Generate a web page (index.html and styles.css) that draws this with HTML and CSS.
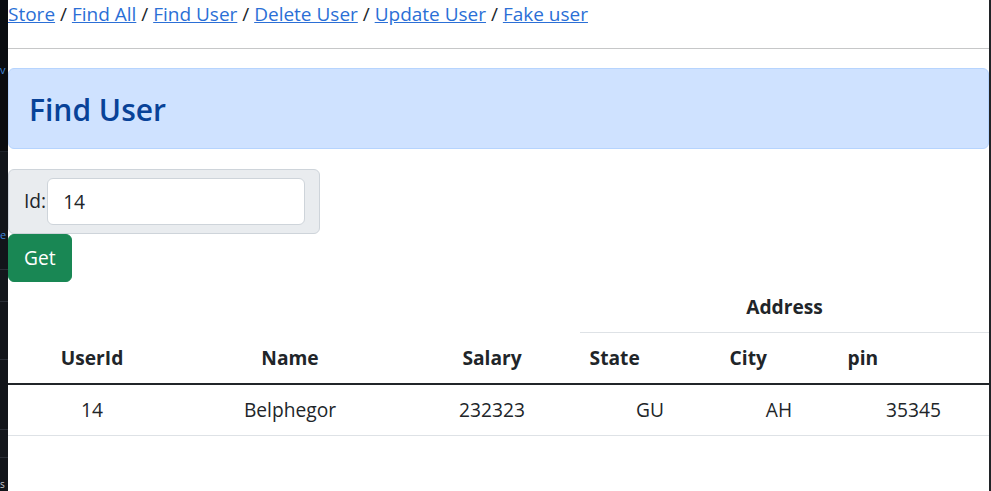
FILE: index.html
```html
<!DOCTYPE html>
<html lang="en">
<head>
<meta charset="utf-8">
<title>Find User</title>
<link rel="stylesheet" href="styles.css">
</head>
<body>
<div class="screen">
  <div class="backdrop">
    <div class="bd-seg bd-top"><span class="bd-glyph bd-v">v</span></div>
    <div class="bd-seg bd-a"></div>
    <div class="bd-seg bd-b"><span class="bd-glyph bd-e">e</span></div>
    <div class="bd-seg bd-c"></div>
    <div class="bd-seg bd-d"></div>
    <div class="bd-seg bd-e2"></div>
    <div class="bd-seg bd-f"></div>
    <div class="bd-seg bd-g"><span class="bd-glyph bd-s">s</span></div>
  </div>
  <div class="viewport">
    <nav class="crumbs">
      <a href="#">Store</a> / <a href="#">Find All</a> / <a href="#">Find User</a> / <a href="#">Delete User</a> / <a href="#">Update User</a> / <a href="#">Fake user</a>
    </nav>
    <hr class="rule">
    <div class="alert">
      <h2 class="alert-title">Find User</h2>
    </div>
    <form class="finder">
      <div class="field">
        <label class="field-label" for="uid">Id:</label>
        <input class="field-input" id="uid" type="text" value="14">
      </div>
      <button class="btn-get" type="button">Get</button>
    </form>
    <table class="users">
      <colgroup>
        <col class="c-id"><col class="c-name"><col class="c-salary"><col class="c-state"><col class="c-city"><col class="c-pin">
      </colgroup>
      <thead>
        <tr>
          <th rowspan="2" class="th-center">UserId</th>
          <th rowspan="2" class="th-center">Name</th>
          <th rowspan="2" class="th-center">Salary</th>
          <th colspan="3" class="th-center">Address</th>
        </tr>
        <tr>
          <th>State</th>
          <th>City</th>
          <th>pin</th>
        </tr>
      </thead>
      <tbody>
        <tr>
          <td>14</td>
          <td>Belphegor</td>
          <td>232323</td>
          <td>GU</td>
          <td>AH</td>
          <td>35345</td>
        </tr>
      </tbody>
    </table>
  </div>
  <div class="edge"></div>
</div>
</body>
</html>
```

FILE: styles.css
```css
* { box-sizing: border-box; }
html, body { margin: 0; padding: 0; }
body {
  font-family: "Open Sans", "Noto Sans", sans-serif;
  font-size: 19.2px;
  line-height: 28.8px;
  color: #212529;
  background: #fff;
}
.screen {
  display: flex;
  width: 991px;
  height: 491px;
  overflow: hidden;
}
.backdrop {
  width: 8px;
  flex: none;
  display: flex;
  flex-direction: column;
  background: #0c0e12;
  overflow: hidden;
}
.bd-seg { position: relative; border-bottom: 1px solid #2a2e36; overflow: hidden; }
.bd-top { height: 152px; background: #0a0c10; border-bottom-color: #1e2229; }
.bd-a { height: 76px; background: #12151a; border-bottom: none; }
.bd-b { height: 42px; background: #12151a; }
.bd-c { height: 32px; background: #14171c; }
.bd-d { height: 58px; background: #12151a; }
.bd-e2 { height: 70px; background: #12151a; }
.bd-f { height: 28px; background: #14171c; }
.bd-g { flex: 1; background: #12151a; border-bottom: none; }
.bd-glyph {
  position: absolute;
  left: 0;
  font-size: 11px;
  line-height: 12px;
  color: #3f86d8;
}
.bd-v { top: 64px; }
.bd-e { top: 1px; }
.bd-s { bottom: 1px; font-size: 10px; color: #c8ccd2; }
.viewport {
  width: 981px;
  flex: none;
  background: #fff;
}
.edge {
  width: 2px;
  flex: none;
  background: #202327;
}
.crumbs { height: 28.8px; white-space: nowrap; font-size: 19px; }
.crumbs a { color: #2b6fd6; text-decoration: underline; }
.rule {
  margin: 19.2px 0;
  border: 0;
  border-top: 1px solid #c6c7c8;
  height: 0;
}
.alert {
  background: #cfe2ff;
  border: 1px solid #b6d4fe;
  border-radius: 6px;
  padding: 20px 20px 18px;
  margin-bottom: 20px;
}
.alert-title {
  margin: 0;
  font-size: 30px;
  line-height: 41px;
  font-weight: 600;
  color: #084298;
}
.finder { display: flex; flex-direction: column; align-items: flex-start; }
.field {
  display: flex;
  align-items: center;
  width: 312px;
  padding: 8px 15px;
  background: #e9ecef;
  border: 1px solid #ced4da;
  border-radius: 6px;
}
.field-label { margin-right: 1px; }
.field-input {
  width: 258px;
  height: 47px;
  padding: 0 15px;
  border: 1px solid #ced4da;
  border-radius: 6px;
  font: inherit;
  color: #212529;
  background: #fff;
}
.btn-get {
  height: 48px;
  padding: 0 15px;
  border: 1px solid #198754;
  border-radius: 6px;
  background: #198754;
  color: #fff;
  font: inherit;
}
.users {
  width: 981px;
  table-layout: fixed;
  border-collapse: collapse;
  margin-top: 1px;
}
.c-id { width: 168px; }
.c-name { width: 228px; }
.c-salary { width: 176px; }
.c-state { width: 140px; }
.c-city { width: 118px; }
.c-pin { width: 151px; }
.users th, .users td {
  padding: 10px 9.6px;
  border-bottom: 1px solid #dee2e6;
}
.users thead tr:last-child th { padding-top: 11px; padding-bottom: 10px; }
.users td { padding-top: 11px; padding-bottom: 10px; }
.users th {
  font-weight: 700;
  text-align: left;
  vertical-align: bottom;
}
.users th.th-center { text-align: center; }
.users td { text-align: center; }
.users tbody { border-top: 2px solid #212529; }
```
